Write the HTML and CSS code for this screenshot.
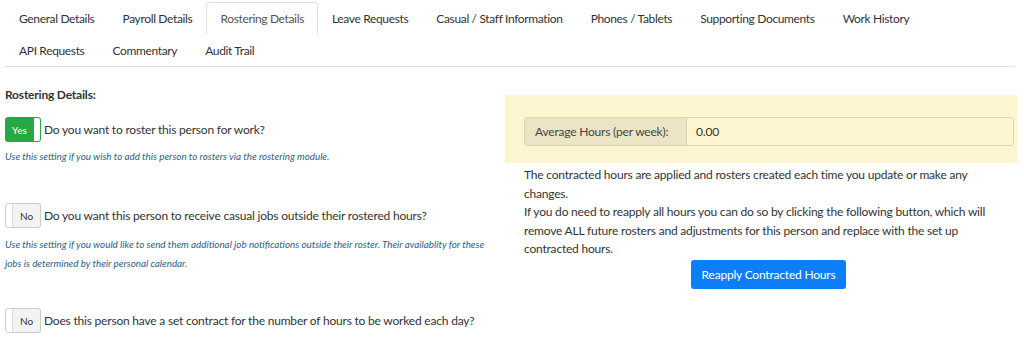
FILE: index.html
```html
<!DOCTYPE html>
<html lang="en">
<head>
  <meta charset="UTF-8" />
  <title>Rostering Details</title>
  <link rel="stylesheet" href="styles.css">
</head>
<body>
  <ul class="tabs">
    <li>General Details</li>
    <li>Payroll Details</li>
    <li class="active">Rostering Details</li>
    <li>Leave Requests</li>
    <li>Casual / Staff Information</li>
    <li>Phones / Tablets</li>
    <li>Supporting Documents</li>
    <li>Work History</li>
    <li class="break"></li>
    <li>API Requests</li>
    <li>Commentary</li>
    <li>Audit Trail</li>
  </ul>

  <div class="content">
    <div class="left-col">
      <h4>Rostering Details:</h4>

      <div class="setting">
        <div class="toggle on"><span class="label">Yes</span><span class="knob"></span></div>
        <span>Do you want to roster this person for work?</span>
      </div>
      <p class="help">Use this setting if you wish to add this person to rosters via the rostering module.</p>

      <div class="setting gap">
        <div class="toggle off"><span class="knob"></span><span class="label">No</span></div>
        <span>Do you want this person to receive casual jobs outside their rostered hours?</span>
      </div>
      <p class="help two">Use this setting if you would like to send them additional job notifications outside their roster. Their availablity for these jobs is determined by their personal calendar.</p>

      <div class="setting gap-last">
        <div class="toggle off"><span class="knob"></span><span class="label">No</span></div>
        <span>Does this person have a set contract for the number of hours to be worked each day?</span>
      </div>
    </div>

    <div class="right-col">
      <div class="hours-panel">
        <div class="input-group">
          <span class="addon">Average Hours (per week):</span>
          <span class="value">0.00</span>
        </div>
      </div>
      <div class="info">
        <p>The contracted hours are applied and rosters created each time you update or make any changes.</p>
        <p>If you do need to reapply all hours you can do so by clicking the following button, which will remove ALL future rosters and adjustments for this person and replace with the set up contracted hours.</p>
        <div class="btn-row"><button class="btn-primary">Reapply Contracted Hours</button></div>
      </div>
    </div>
  </div>
</body>
</html>
```

FILE: styles.css
```css
body {
  margin: 0;
  font-family: 'Lato', 'Open Sans', sans-serif;
  font-size: 12px;
  letter-spacing: -0.2px;
  color: #333;
  background: white;
}
.tabs {
  list-style: none;
  margin: 2px 9px 0 5px;
  padding: 0;
  display: flex;
  flex-wrap: wrap;
  border-bottom: 1px solid #dee2e6;
}
.tabs li {
  padding: 0 13px 0 13px;
  height: 31px;
  line-height: 31px;
  letter-spacing: -0.35px;
  color: #333;
  border: 1px solid transparent;
  border-bottom: none;
  border-radius: 4px 4px 0 0;
}
.tabs li.break {
  flex-basis: 100%;
  height: 0;
  padding: 0;
  border: none;
}
.tabs li.active {
  border-color: #dee2e6;
  color: #555;
}
.content {
  display: flex;
  padding: 0 7px 0 5px;
}
.left-col {
  width: 500px;
}
.right-col {
  flex: 1;
  padding-top: 28px;
}
h4 {
  margin: 20px 0 14px;
  line-height: 16px;
  font-size: 12px;
  font-weight: bold;
  color: #333;
}
.setting {
  display: flex;
  align-items: center;
  gap: 3px;
}
.setting.gap {
  margin-top: 37px;
}
.setting.gap-last {
  margin-top: 35px;
}
.toggle {
  width: 34px;
  height: 23px;
  border: 1px solid #ccc;
  border-radius: 3px;
  display: flex;
  overflow: hidden;
  font-size: 10px;
  letter-spacing: 0;
  flex-shrink: 0;
}
.toggle .label {
  flex: 1;
  display: flex;
  align-items: center;
  justify-content: center;
}
.toggle .knob {
  width: 6px;
  background: white;
}
.toggle.on {
  background: #28a745;
  border-color: #28a745;
  color: white;
}
.toggle.on .knob {
  border-left: 1px solid #28a745;
}
.toggle.off {
  background: #f3f3f3;
  color: #333;
}
.toggle.off .knob {
  border-right: 1px solid #ddd;
}
.help {
  margin: 5px 0 0;
  max-width: 488px;
  font-size: 9.8px;
  letter-spacing: 0;
  font-style: italic;
  color: #1f5f8b;
  line-height: 19px;
}
.help.two {
  margin-top: 7px;
}
.hours-panel {
  background: #fdf5cf;
  padding: 22px 3px 17px 19px;
}
.input-group {
  display: flex;
  height: 27px;
  border: 1px solid #dcd5b0;
  border-radius: 3px;
  overflow: hidden;
}
.addon {
  width: 151px;
  background: #ebe5c5;
  border-right: 1px solid #dcd5b0;
  padding-left: 10px;
  display: flex;
  align-items: center;
  color: #444;
}
.value {
  flex: 1;
  padding-left: 9px;
  display: flex;
  align-items: center;
  background: #fdf5cf;
}
.info {
  padding: 3px 4px 0 19px;
  line-height: 18.5px;
}
.info p {
  margin: 0;
}
.btn-row {
  display: flex;
  justify-content: center;
  margin-top: 1px;
}
.btn-primary {
  font-family: 'Lato', 'Open Sans', sans-serif;
  font-size: 12px;
  letter-spacing: -0.2px;
  background: #0d7ef8;
  color: white;
  border: none;
  border-radius: 3px;
  padding: 0 11px;
  height: 29px;
}
```
